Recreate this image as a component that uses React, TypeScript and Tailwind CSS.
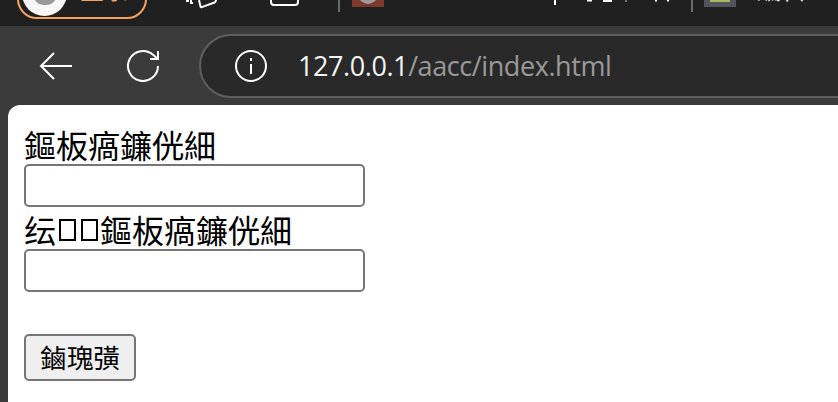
const cjk = "font-['Noto_Sans_CJK_SC','Noto_Sans_CJK_TC',sans-serif]";

export default function App() {
  return (
    <div className="w-[838px] h-[402px] overflow-hidden flex flex-col bg-[#3b3b3b] font-['Open_Sans',sans-serif]">
      <div className={`h-[26px] shrink-0 bg-[#202020] overflow-hidden flex items-start text-white ${cjk}`}>
        <div className="ml-[17px] mt-[-21px] w-[130px] h-[40px] shrink-0 rounded-full border-2 border-[#f4a25f] flex items-start pl-[3px]">
          <div className="w-[45px] h-[46px] mt-[-11px] rounded-full bg-[#f8f8f8] flex items-start justify-center shrink-0">
            <div className="w-[24px] h-[22px] mt-[13px] rounded-full bg-[#9a9a9a]" />
          </div>
          <div className="ml-[13px] mt-[-4px] text-[24px] leading-[24px] text-[#f4a25f] whitespace-nowrap">登录</div>
        </div>
        <svg className="ml-[38px] shrink-0" width="32" height="9" viewBox="0 0 32 9" fill="none" stroke="#fff" strokeWidth="2">
          <path d="M1 1h3M6 0v3h2M14 0l1.500 6.500q.5 1 2 .4l12-4.400q1.500-.8 1.500-2.500" />
        </svg>
        <svg className="ml-[53px] shrink-0" width="29" height="7" viewBox="0 0 29 7" fill="none" stroke="#fff" strokeWidth="2">
          <path d="M1 0v2a3 3 0 0 0 3 3h21a3 3 0 0 0 3-3V0" />
        </svg>
        <div className="ml-[39px] w-[2px] h-[12px] shrink-0 bg-[#6b6b6b]" />
        <div className="ml-[12px] w-[32px] h-[7px] shrink-0 bg-[#7d3a2a] flex justify-center items-end overflow-hidden">
          <div className="w-[20px] h-[20px] mb-[3px] rounded-full bg-[#a09a98] shrink-0" />
        </div>
        <svg className="ml-[170px] shrink-0" width="116" height="6" viewBox="0 0 116 6" fill="none" stroke="#fff" strokeWidth="2">
          <path d="M1 0v5M33 0.500h5M49 1h9M101 0.500h2M113 0.500h2" />
          <path d="M72 0v2" stroke="#777" />
        </svg>
        <div className="ml-[21px] w-[2px] h-[12px] shrink-0 bg-[#6b6b6b]" />
        <div className="ml-[11px] w-[32px] h-[7px] shrink-0 bg-[#52565c] flex justify-center items-start">
          <div className="w-[20px] h-[2px] bg-[#a9b85f]" />
        </div>
        <div className="ml-[21px] mt-[-23px] text-[24px] leading-[24px] whitespace-nowrap shrink-0">編輯</div>
        <div className="ml-[25px] mt-[-24px] text-[24px] leading-[24px] whitespace-nowrap shrink-0">三</div>
      </div>
      <div className="h-[79px] shrink-0 flex items-center">
        <svg className="ml-[39px] shrink-0" width="34" height="30" viewBox="0 0 34 30" fill="none" stroke="#fff" strokeWidth="2">
          <path d="M33 15H2M15 2 2 15l13 13" />
        </svg>
        <svg className="ml-[54px] shrink-0" width="34" height="34" viewBox="0 0 34 34" fill="none" stroke="#fff" strokeWidth="2">
          <path d="M31 17a15 15 0 1 1-5-11.200L31 10M31 2v8h-8" />
        </svg>
        <div className="ml-[38px] h-[64px] flex-1 mr-[-40px] rounded-full border-2 border-[#5f5f5f] bg-[#292929] flex items-center">
          <svg className="ml-[34px] shrink-0" width="32" height="32" viewBox="0 0 32 32" fill="none" stroke="#fff" strokeWidth="2">
            <circle cx="16" cy="16" r="15" />
            <path d="M16 14v10M16 8v3" />
          </svg>
          <div className="ml-[31px] text-[27px] leading-none tracking-[-0.42px] text-[#f4f4f4]">
            127.0.0.1<span className="text-[#9a9a9a]">/aacc/index.html</span>
          </div>
        </div>
      </div>
      <div className={`flex-1 ml-[8px] bg-white rounded-tl-[12px] pl-[16px] pt-[20px] text-black font-['Noto_Sans_CJK_TC','Noto_Sans_CJK_SC',sans-serif]`}>
        <div className="text-[32px] leading-[39px] h-[39px]">鏂板瘑鐮侊細</div>
        <input className="block w-[341px] h-[43px] border-2 border-[#767676] rounded-[5px] bg-white" />
        <div className="text-[32px] leading-[39px] h-[39px] mt-[3px] flex items-center">
          <span>纭</span>
          <span className="w-[17px] h-[22px] mx-[2.500px] mt-[1px] border-2 border-black shrink-0" />
          <span className="w-[17px] h-[22px] mx-[2.500px] mt-[1px] border-2 border-black shrink-0" />
          <span>鏂板瘑鐮侊細</span>
        </div>
        <input className="block w-[341px] h-[43px] border-2 border-[#767676] rounded-[5px] bg-white" />
        <button className="block mt-[42px] w-[112px] h-[47px] border-2 border-[#767676] rounded-[5px] bg-[#efefef] text-[26.67px] leading-none">鏀瑰彉</button>
      </div>
    </div>
  );
}
